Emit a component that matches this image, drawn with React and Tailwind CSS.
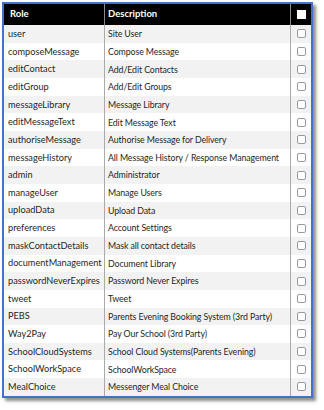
import React from "react";

const roles = [
  ["user", "Site User"],
  ["composeMessage", "Compose Message"],
  ["editContact", "Add/Edit Contacts"],
  ["editGroup", "Add/Edit Groups"],
  ["messageLibrary", "Message Library"],
  ["editMessageText", "Edit Message Text"],
  ["authoriseMessage", "Authorise Message for Delivery"],
  ["messageHistory", "All Message History / Response Management"],
  ["admin", "Administrator"],
  ["manageUser", "Manage Users"],
  ["uploadData", "Upload Data"],
  ["preferences", "Account Settings"],
  ["maskContactDetails", "Mask all contact details"],
  ["documentManagement", "Document Library"],
  ["passwordNeverExpires", "Password Never Expires"],
  ["tweet", "Tweet"],
  ["PEBS", "Parents Evening Booking System (3rd Party)"],
  ["Way2Pay", "Pay Our School (3rd Party)"],
  ["SchoolCloudSystems", "School Cloud Systems(Parents Evening)"],
  ["SchoolWorkSpace", "SchoolWorkSpace"],
  ["MealChoice", "Messenger Meal Choice"],
];

export default function App() {
  return (
    <div className="w-[324px] h-[410px] bg-white pl-[2px] pt-[2px]">
      <div className="w-[311px] border-[2px] border-[#4472c4] bg-white shadow-[3px_3px_3px_rgba(0,0,0,0.45)] font-['Lato',sans-serif] text-[9.2px] text-[#262626]">
        <div className="flex h-[21px] bg-black text-white font-bold items-center text-[9.5px]">
          <div className="w-[101px] pl-[6px] border-r-[1.5px] border-[#888] h-full flex items-center">Role</div>
          <div className="w-[186px] pl-[3px] border-r-[1.5px] border-[#888] h-full flex items-center">Description</div>
          <div className="flex-1 flex items-center justify-center">
            <span className="w-[9px] h-[9px] bg-white"></span>
          </div>
        </div>
        {roles.map(([role, desc], i) => (
          <div
            key={role}
            className={`flex h-[17.67px] items-center ${i % 2 === 0 ? "bg-[#f2f2f2]" : "bg-white"}`}
          >
            <div className="w-[101px] pl-[4px] border-r-[1.5px] border-[#aaa] h-full flex items-center whitespace-nowrap overflow-hidden">{role}</div>
            <div className="w-[186px] pl-[3px] border-r-[1.5px] border-[#aaa] h-full flex items-center whitespace-nowrap overflow-hidden text-[8.8px] tracking-[-0.1px]">{desc}</div>
            <div className="flex-1 flex items-center justify-center">
              <span className="w-[9px] h-[9px] bg-white border border-[#999] rounded-[2px]"></span>
            </div>
          </div>
        ))}
      </div>
    </div>
  );
}
